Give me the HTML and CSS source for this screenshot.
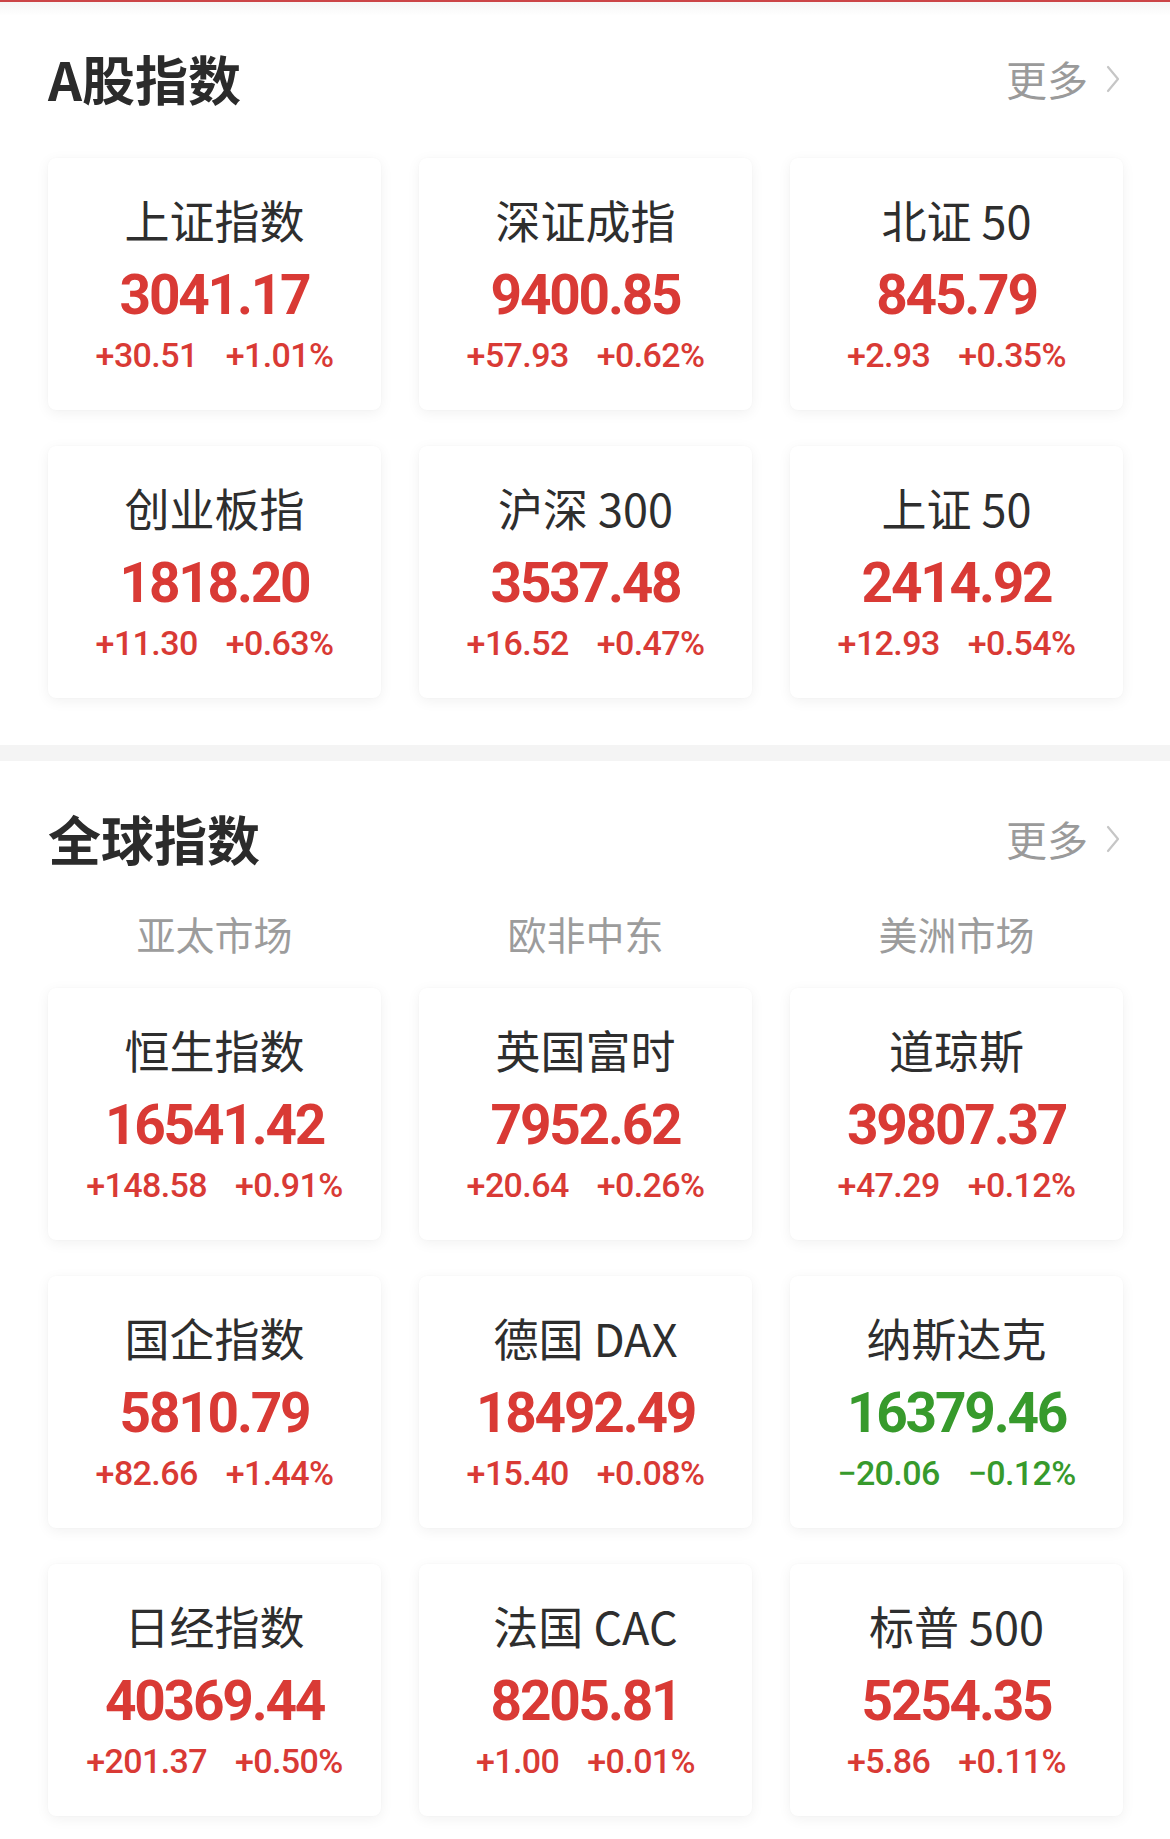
FILE: index.html
```html
<!DOCTYPE html>
<html lang="zh-CN">
<head>
<meta charset="utf-8">
<title>指数</title>
<link rel="stylesheet" href="styles.css">
</head>
<body>
<div class="page">
  <section class="section section-a">
    <header class="sec-head">
      <h2 class="sec-title">A股指数</h2>
      <a class="more">更多<svg class="chev" viewBox="0 0 16 32" width="16" height="32"><path d="M3 4 L13 16 L3 28" fill="none" stroke="#c6c6c6" stroke-width="2.2" stroke-linecap="round" stroke-linejoin="round"/></svg></a>
    </header>
    <div class="grid">
      <div class="card"><div class="name">上证指数</div><div class="val up">3041.17</div><div class="chg up"><span>+30.51</span><span>+1.01%</span></div></div>
      <div class="card"><div class="name">深证成指</div><div class="val up">9400.85</div><div class="chg up"><span>+57.93</span><span>+0.62%</span></div></div>
      <div class="card"><div class="name">北证 50</div><div class="val up">845.79</div><div class="chg up"><span>+2.93</span><span>+0.35%</span></div></div>
      <div class="card"><div class="name">创业板指</div><div class="val up">1818.20</div><div class="chg up"><span>+11.30</span><span>+0.63%</span></div></div>
      <div class="card"><div class="name">沪深 300</div><div class="val up">3537.48</div><div class="chg up"><span>+16.52</span><span>+0.47%</span></div></div>
      <div class="card"><div class="name">上证 50</div><div class="val up">2414.92</div><div class="chg up"><span>+12.93</span><span>+0.54%</span></div></div>
    </div>
  </section>
  <div class="band"></div>
  <section class="section section-g">
    <header class="sec-head">
      <h2 class="sec-title">全球指数</h2>
      <a class="more">更多<svg class="chev" viewBox="0 0 16 32" width="16" height="32"><path d="M3 4 L13 16 L3 28" fill="none" stroke="#c6c6c6" stroke-width="2.2" stroke-linecap="round" stroke-linejoin="round"/></svg></a>
    </header>
    <div class="tabs">
      <div class="tab">亚太市场</div>
      <div class="tab">欧非中东</div>
      <div class="tab">美洲市场</div>
    </div>
    <div class="grid">
      <div class="card"><div class="name">恒生指数</div><div class="val up">16541.42</div><div class="chg up"><span>+148.58</span><span>+0.91%</span></div></div>
      <div class="card"><div class="name">英国富时</div><div class="val up">7952.62</div><div class="chg up"><span>+20.64</span><span>+0.26%</span></div></div>
      <div class="card"><div class="name">道琼斯</div><div class="val up">39807.37</div><div class="chg up"><span>+47.29</span><span>+0.12%</span></div></div>
      <div class="card"><div class="name">国企指数</div><div class="val up">5810.79</div><div class="chg up"><span>+82.66</span><span>+1.44%</span></div></div>
      <div class="card"><div class="name">德国 DAX</div><div class="val up">18492.49</div><div class="chg up"><span>+15.40</span><span>+0.08%</span></div></div>
      <div class="card"><div class="name">纳斯达克</div><div class="val down">16379.46</div><div class="chg down"><span>−20.06</span><span>−0.12%</span></div></div>
      <div class="card"><div class="name">日经指数</div><div class="val up">40369.44</div><div class="chg up"><span>+201.37</span><span>+0.50%</span></div></div>
      <div class="card"><div class="name">法国 CAC</div><div class="val up">8205.81</div><div class="chg up"><span>+1.00</span><span>+0.01%</span></div></div>
      <div class="card"><div class="name">标普 500</div><div class="val up">5254.35</div><div class="chg up"><span>+5.86</span><span>+0.11%</span></div></div>
    </div>
  </section>
</div>
</body>
</html>
```

FILE: styles.css
```css
* { box-sizing: border-box; }
html, body { margin: 0; padding: 0; background: #fff; }
body {
  font-family: "Noto Sans CJK SC", "Noto Sans", sans-serif;
  color: #333;
  width: 1170px;
}
.page {
  border-top: 2px solid #cc4548;
  background: linear-gradient(#f6f6f6, #fff 14px);
}
.section { padding: 0 47px 0 48px; }
.section-a { padding-top: 46px; padding-bottom: 47px; }
.section-g { padding-top: 47px; padding-bottom: 22px; background: #fff; }
.band { height: 16px; background: #f4f4f4; }

.sec-head {
  display: flex;
  justify-content: space-between;
  align-items: center;
  height: 60px;
}
.sec-title {
  margin: 0;
  font-size: 53px;
  line-height: 60px;
  font-weight: 700;
  color: #2b2b2b;
}
.more {
  display: flex;
  align-items: center;
  font-size: 41px;
  line-height: 46px;
  color: #9a9a9a;
  gap: 17px;
  margin-right: 2px;
}
.chev { display: block; margin-top: 2px; }

.section-a .grid { margin-top: 50px; }
.tabs {
  margin-top: 42px;
  display: grid;
  grid-template-columns: repeat(3, 1fr);
  column-gap: 38px;
}
.tab {
  text-align: center;
  font-size: 39px;
  line-height: 46px;
  color: #9c9c9c;
}
.section-g .grid { margin-top: 32px; }

.grid {
  display: grid;
  grid-template-columns: repeat(3, 1fr);
  column-gap: 38px;
  row-gap: 36px;
}
.card {
  background: #fff;
  border-radius: 8px;
  box-shadow: 0 3px 14px rgba(0, 0, 0, 0.06), 0 0 2px rgba(0, 0, 0, 0.03);
  height: 252px;
  padding-top: 35px;
  text-align: center;
}
.name {
  font-size: 45px;
  line-height: 53px;
  color: #2e2e2e;
}
.val {
  margin-top: 19px;
  font-family: Roboto, "Liberation Sans", sans-serif;
  font-weight: 700;
  font-size: 55px;
  line-height: 60px;
  letter-spacing: -2.2px;
}
.chg {
  margin-top: 10px;
  font-family: Roboto, "Liberation Sans", sans-serif;
  font-weight: 500;
  font-size: 34px;
  line-height: 40px;
  letter-spacing: -0.6px;
  display: flex;
  justify-content: center;
  gap: 28px;
}
.up { color: #d93a35; }
.down { color: #379a2c; }
```
